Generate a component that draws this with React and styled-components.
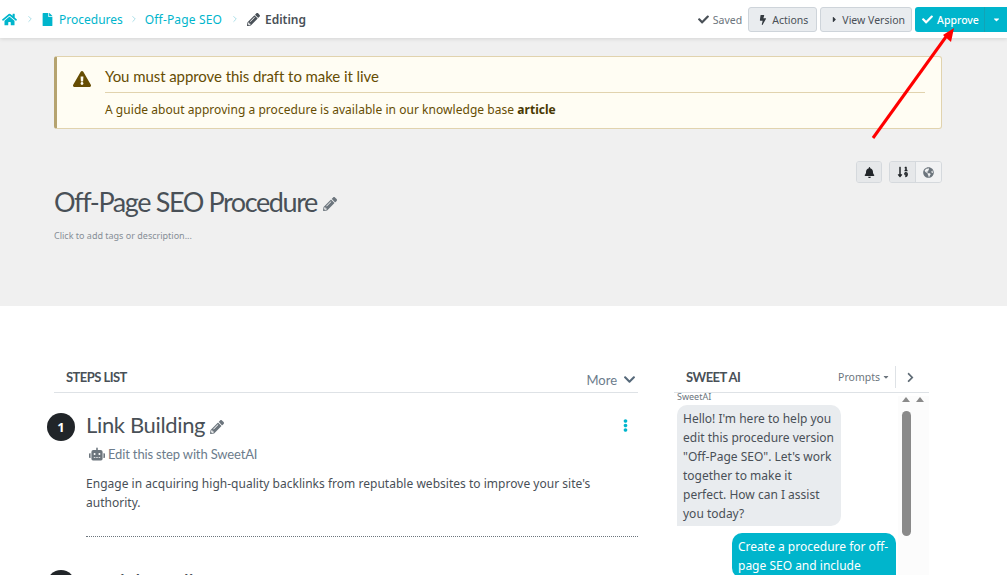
import React from 'react'
import styled, { createGlobalStyle } from 'styled-components'
import {
  FaHome,
  FaFile,
  FaPencilAlt,
  FaCheck,
  FaBolt,
  FaCaretRight,
  FaCaretDown,
  FaBell,
  FaGlobeAmericas,
  FaExclamationTriangle,
  FaRobot,
  FaEllipsisV,
  FaChevronDown,
  FaChevronRight,
  FaSortNumericDown,
} from 'react-icons/fa'
import { LuChevronRight } from 'react-icons/lu'

const GlobalStyle = createGlobalStyle`
  html, body {
    margin: 0;
    height: 100%;
    overflow: hidden;
    background: #fff;
    font-family: 'Noto Sans', 'Open Sans', sans-serif;
    color: #495057;
  }
`

const Page = styled.div`
  position: relative;
  height: 575px;
  overflow: hidden;
`

const TopBar = styled.header`
  height: 38px;
  display: flex;
  align-items: center;
  justify-content: space-between;
  background: #fff;
  box-shadow: 0 1px 4px rgba(0, 0, 0, 0.12);
  position: relative;
`

const Crumbs = styled.nav`
  display: flex;
  align-items: center;
  padding-left: 2px;
  font-size: 12px;
  color: #00b5cc;
`

const CrumbLink = styled.span`
  display: flex;
  align-items: center;
  gap: 5px;
  letter-spacing: ${p => p.$spacing || 0}px;
  font-weight: ${p => (p.$current ? 600 : 400)};
  color: ${p => (p.$current ? '#495057' : '#00b5cc')};
`

const CrumbSep = styled.span`
  display: flex;
  color: #9ad9e3;
  margin: ${p => p.$m || '0 6px'};
`

const Actions = styled.div`
  display: flex;
  align-items: center;
  height: 25px;
  margin-top: 1px;
`

const SavedLabel = styled.span`
  display: flex;
  align-items: center;
  gap: 4px;
  font-size: 10.5px;
  color: #6c757d;
  margin-right: 6px;
  svg {
    color: #495057;
  }
`

const GrayButton = styled.button`
  display: flex;
  align-items: center;
  gap: ${p => p.$gap}px;
  height: 25px;
  padding: ${p => p.$pad};
  margin-right: 3px;
  border: 1px solid #ced4da;
  border-radius: 3px;
  background: #e9ecef;
  color: #495057;
  font: 10.5px 'Noto Sans', sans-serif;
  svg {
    color: #343a40;
  }
`

const SplitButton = styled.div`
  display: flex;
  height: 25px;
  width: 92px;
  background: #00b5cc;
  border-radius: 3px 0 0 3px;
  color: #fff;
  font-size: 10.5px;
  font-weight: 500;
`

const SplitMain = styled.span`
  display: flex;
  align-items: center;
  gap: 4px;
  width: 70px;
  padding-left: 7px;
  box-sizing: border-box;
  border-right: 1px solid #12a3b6;
`

const SplitCaret = styled.span`
  display: flex;
  align-items: center;
  justify-content: center;
  flex: 1;
`

const Hero = styled.section`
  height: 268px;
  box-sizing: border-box;
  background: #f0f0f0;
  padding: 18px 65px 0 54px;
`

const Alert = styled.div`
  display: flex;
  height: 73px;
  box-sizing: border-box;
  background: #fffdf3;
  border: 1px solid #e1d3ae;
  border-left: 3px solid #b5a36f;
  border-radius: 3px;
  padding: 0 16px;
  color: #664d03;
`

const AlertIcon = styled.div`
  width: 32px;
  padding-top: 12px;
  font-size: 18px;
  color: #664d03;
`

const AlertBody = styled.div`
  flex: 1;
`

const AlertTitle = styled.div`
  height: 35px;
  border-bottom: 1px solid #e1d3ae;
  font: 15px/38px Lato, sans-serif;
  letter-spacing: -0.07px;
`

const AlertText = styled.div`
  font-size: 12px;
  line-height: 33px;
  letter-spacing: 0.04px;
  strong {
    font-weight: 700;
    color: #493802;
  }
`

const ToolRow = styled.div`
  display: flex;
  justify-content: flex-end;
  gap: 7px;
  margin-top: 32px;
`

const ToolGroup = styled.div`
  display: flex;
  border: 1px solid #d5d9dd;
  border-radius: 3px;
  overflow: hidden;
`

const ToolButton = styled.span`
  display: flex;
  align-items: center;
  justify-content: center;
  width: ${p => p.$w}px;
  height: 20px;
  background: ${p => (p.$active ? '#e6e8ea' : '#f1f2f3')};
  border-right: ${p => (p.$divider ? '1px solid #d5d9dd' : '0')};
  color: ${p => p.$color || '#212529'};
  font-size: 11px;
`

const Title = styled.h1`
  display: flex;
  align-items: center;
  gap: 6px;
  margin: 1px 0 0;
  font: 400 27px/36px Lato, sans-serif;
  letter-spacing: -1.4px;
  color: #495057;
  svg {
    font-size: 14px;
    color: #6c757d;
    margin-top: 4px;
  }
`

const TagsHint = styled.div`
  margin-top: 9px;
  font-size: 9px;
  color: #868e96;
`

const Content = styled.main`
  display: flex;
  padding: 56px 0 0 54px;
`

const StepsColumn = styled.div`
  width: 584px;
  margin-right: 36px;
`

const SectionHead = styled.div`
  display: flex;
  align-items: center;
  justify-content: space-between;
  height: 31px;
  box-sizing: border-box;
  border-bottom: 1px solid #dee2e6;
`

const SectionTitle = styled.h2`
  margin: 0 0 0 12px;
  font: 700 13px/30px Lato, sans-serif;
  letter-spacing: -0.55px;
  color: #495057;
`

const MoreToggle = styled.span`
  display: flex;
  align-items: center;
  gap: 6px;
  font: 13px Lato, sans-serif;
  color: #6c7c8c;
  padding: 5px 2px 0 0;
  svg {
    color: #56697a;
  }
`

const Step = styled.article`
  position: relative;
  padding: 16px 0 0 32px;
`

const StepNumber = styled.span`
  position: absolute;
  left: -7px;
  top: 20px;
  display: flex;
  align-items: center;
  justify-content: center;
  width: 28px;
  height: 28px;
  border-radius: 50%;
  background: #212529;
  color: #fff;
  font: 700 13px 'Noto Sans', sans-serif;
`

const StepHeading = styled.h3`
  display: flex;
  align-items: center;
  gap: 5px;
  margin: 0;
  font: 400 22px/32px Lato, sans-serif;
  letter-spacing: -0.35px;
  color: #495057;
  svg {
    font-size: 14px;
    color: #6c757d;
    margin-top: 3px;
  }
`

const KebabIcon = styled.span`
  position: absolute;
  right: 6px;
  top: 25px;
  color: #00b5cc;
  font-size: 13px;
`

const AiLink = styled.div`
  display: flex;
  align-items: center;
  gap: 3px;
  margin: 3px 0 0 3px;
  font: 13px/20px Lato, sans-serif;
  letter-spacing: -0.15px;
  color: #6c7c8c;
  svg {
    color: #6c757d;
    font-size: 16px;
  }
`

const StepText = styled.p`
  margin: 10px 0 0;
  font-size: 12px;
  line-height: 19px;
  letter-spacing: 0.02px;
  color: #495057;
`

const Dotted = styled.hr`
  margin: 24px 0 13px;
  border: 0;
  border-top: 1px dotted #6c757d;
`

const AiColumn = styled.aside`
  width: 255px;
`

const AiPrompts = styled.div`
  display: flex;
  align-items: center;
  height: 24px;
  font: 10.5px 'Noto Sans', sans-serif;
  color: #6c757d;
`

const PromptLabel = styled.span`
  display: flex;
  align-items: center;
  gap: 2px;
  padding-right: 5px;
  height: 22px;
  border-right: 1px solid #dee2e6;
`

const PromptChevron = styled.span`
  display: flex;
  width: 33px;
  padding-right: 4px;
  box-sizing: border-box;
  justify-content: center;
  color: #5f6b75;
  font-size: 11px;
`

const ChatWrap = styled.div`
  position: relative;
  height: 200px;
`

const SenderName = styled.div`
  margin: -2px 0 2px;
  padding-left: 3px;
  font-size: 9px;
  line-height: 12px;
  color: #6c757d;
`

const Bubble = styled.div`
  box-sizing: border-box;
  width: ${p => p.$w}px;
  margin: ${p => (p.$own ? '7px 0 0 58px' : '0 0 0 3px')};
  padding: 4px 5px 3px 6px;
  border-radius: ${p => (p.$own ? '10px 10px 0 10px' : '10px 10px 10px 0')};
  background: ${p => (p.$own ? '#00b5cc' : '#e9ecef')};
  color: ${p => (p.$own ? '#fff' : '#495057')};
  font-size: 12px;
  line-height: 19px;
`

const ScrollTrack = styled.div`
  position: absolute;
  top: 5px;
  left: 224px;
  width: 31px;
  height: 195px;
  background: #fcfcfc;
`

const ScrollArrows = styled.div`
  display: flex;
  gap: 6px;
  margin: 1px 0 0 4px;
`

const ScrollArrow = styled.span`
  width: 0;
  height: 0;
  border-left: 4.5px solid transparent;
  border-right: 4.5px solid transparent;
  border-bottom: 5px solid #8a8a8a;
`

const ScrollThumb = styled.div`
  width: 9px;
  height: 125px;
  margin: 9px 0 0 4px;
  border-radius: 5px;
  background: #8a8a8a;
`

const Annotation = styled.svg`
  position: absolute;
  left: 860px;
  top: 20px;
  pointer-events: none;
`

const App = () => (
  <Page>
    <GlobalStyle />
    <TopBar>
      <Crumbs>
        <CrumbLink>
          <FaHome size={15} />
        </CrumbLink>
        <CrumbSep $m="0 6px 0 8px">
          <LuChevronRight size={10} />
        </CrumbSep>
        <CrumbLink>
          <FaFile size={13} />
          Procedures
        </CrumbLink>
        <CrumbSep>
          <LuChevronRight size={10} />
        </CrumbSep>
        <CrumbLink $spacing={0.15}>Off-Page SEO</CrumbLink>
        <CrumbSep $m="0 7px 0 8px">
          <LuChevronRight size={10} />
        </CrumbSep>
        <CrumbLink $current>
          <FaPencilAlt size={13} />
          Editing
        </CrumbLink>
      </Crumbs>
      <Actions>
        <SavedLabel>
          <FaCheck size={11} />
          Saved
        </SavedLabel>
        <GrayButton $gap={4} $pad="0 8px 0 9px">
          <FaBolt size={10} />
          Actions
        </GrayButton>
        <GrayButton $gap={3} $pad="0 6px 0 9px">
          <FaCaretRight size={9} />
          View Version
        </GrayButton>
        <SplitButton>
          <SplitMain>
            <FaCheck size={11} />
            Approve
          </SplitMain>
          <SplitCaret>
            <FaCaretDown size={9} />
          </SplitCaret>
        </SplitButton>
      </Actions>
    </TopBar>

    <Hero>
      <Alert>
        <AlertIcon>
          <FaExclamationTriangle />
        </AlertIcon>
        <AlertBody>
          <AlertTitle>You must approve this draft to make it live</AlertTitle>
          <AlertText>
            A guide about approving a procedure is available in our knowledge
            base <strong>article</strong>
          </AlertText>
        </AlertBody>
      </Alert>
      <ToolRow>
        <ToolGroup>
          <ToolButton $w={24} $active>
            <FaBell />
          </ToolButton>
        </ToolGroup>
        <ToolGroup>
          <ToolButton $w={25} $active $divider>
            <FaSortNumericDown size={12} />
          </ToolButton>
          <ToolButton $w={25} $color="#6c757d">
            <FaGlobeAmericas />
          </ToolButton>
        </ToolGroup>
      </ToolRow>
      <Title>
        Off-Page SEO Procedure
        <FaPencilAlt />
      </Title>
      <TagsHint>Click to add tags or description...</TagsHint>
    </Hero>

    <Content>
      <StepsColumn>
        <SectionHead>
          <SectionTitle>STEPS LIST</SectionTitle>
          <MoreToggle>
            More
            <FaChevronDown size={13} />
          </MoreToggle>
        </SectionHead>
        <Step>
          <StepNumber>1</StepNumber>
          <StepHeading>
            Link Building
            <FaPencilAlt />
          </StepHeading>
          <KebabIcon>
            <FaEllipsisV />
          </KebabIcon>
          <AiLink>
            <FaRobot />
            Edit this step with SweetAI
          </AiLink>
          <StepText>
            Engage in acquiring high-quality backlinks from reputable websites
            to improve your site's authority.
          </StepText>
          <Dotted />
        </Step>
        <Step>
          <StepNumber>2</StepNumber>
          <StepHeading>Social Media</StepHeading>
        </Step>
      </StepsColumn>
      <AiColumn>
        <SectionHead>
          <SectionTitle>SWEET AI</SectionTitle>
          <AiPrompts>
            <PromptLabel>
              Prompts
              <FaCaretDown size={8} />
            </PromptLabel>
            <PromptChevron>
              <FaChevronRight />
            </PromptChevron>
          </AiPrompts>
        </SectionHead>
        <ChatWrap>
          <SenderName>SweetAI</SenderName>
          <Bubble $w={164}>
            Hello! I'm here to help you edit this procedure version "Off-Page
            SEO". Let's work together to make it perfect. How can I assist you
            today?
          </Bubble>
          <Bubble $own $w={164}>
            Create a procedure for off-page SEO and include
          </Bubble>
          <ScrollTrack>
            <ScrollArrows>
              <ScrollArrow />
              <ScrollArrow />
            </ScrollArrows>
            <ScrollThumb />
          </ScrollTrack>
        </ChatWrap>
      </AiColumn>
    </Content>

    <Annotation width={110} height={125} viewBox="0 0 110 125">
      <path d="M13 118 L88 14" stroke="#f00" strokeWidth="3" fill="none" />
      <path d="M94 8 L83 15 L91 22 Z" fill="#f00" />
    </Annotation>
  </Page>
)

export default App
